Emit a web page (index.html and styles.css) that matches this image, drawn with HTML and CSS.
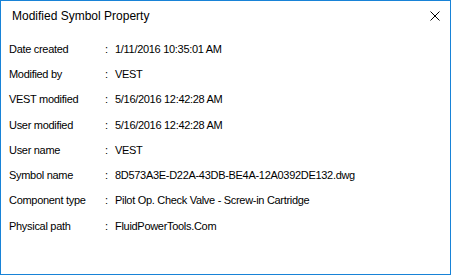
FILE: index.html
```html
<!DOCTYPE html>
<html>
<head>
<meta charset="utf-8">
<link rel="stylesheet" href="styles.css">
</head>
<body>
<div class="window">
  <div class="titlebar">
    <span class="title">Modified Symbol Property</span>
    <svg class="close" width="10" height="10" viewBox="0 0 10 10"><path d="M0.5 0.5 L9.5 9.5 M9.5 0.5 L0.5 9.5" stroke="#000" stroke-width="1" fill="none"/></svg>
  </div>
  <div class="props">
    <div class="row"><span class="label">Date created</span><span class="colon">:</span><span class="value">1/11/2016 10:35:01 AM</span></div>
    <div class="row"><span class="label">Modified by</span><span class="colon">:</span><span class="value">VEST</span></div>
    <div class="row"><span class="label">VEST modified</span><span class="colon">:</span><span class="value">5/16/2016 12:42:28 AM</span></div>
    <div class="row"><span class="label">User modified</span><span class="colon">:</span><span class="value">5/16/2016 12:42:28 AM</span></div>
    <div class="row"><span class="label">User name</span><span class="colon">:</span><span class="value">VEST</span></div>
    <div class="row"><span class="label">Symbol name</span><span class="colon">:</span><span class="value">8D573A3E-D22A-43DB-BE4A-12A0392DE132.dwg</span></div>
    <div class="row"><span class="label">Component type</span><span class="colon">:</span><span class="value">Pilot Op. Check Valve - Screw-in Cartridge</span></div>
    <div class="row"><span class="label">Physical path</span><span class="colon">:</span><span class="value">FluidPowerTools.Com</span></div>
  </div>
</div>
</body>
</html>
```
FILE: styles.css
```css
html, body {
  margin: 0;
  padding: 0;
  background: #fff;
}
.window {
  box-sizing: border-box;
  width: 451px;
  height: 275px;
  border: 1px solid #1883d7;
  background: #fff;
  font-family: "Liberation Sans", Arial, sans-serif;
  color: #000;
}
.titlebar {
  height: 30px;
  display: flex;
  align-items: center;
  justify-content: space-between;
  padding: 0 10px 0 11px;
}
.title {
  font-size: 12px;
  color: #000;
}
.close {
  display: block;
}
.props {
  padding-top: 5px;
}
.row {
  display: flex;
  height: 25.3px;
  align-items: center;
  font-size: 11px;
  letter-spacing: -0.3px;
  padding-left: 8px;
}
.label {
  width: 96px;
}
.colon {
  width: 10px;
}
```
